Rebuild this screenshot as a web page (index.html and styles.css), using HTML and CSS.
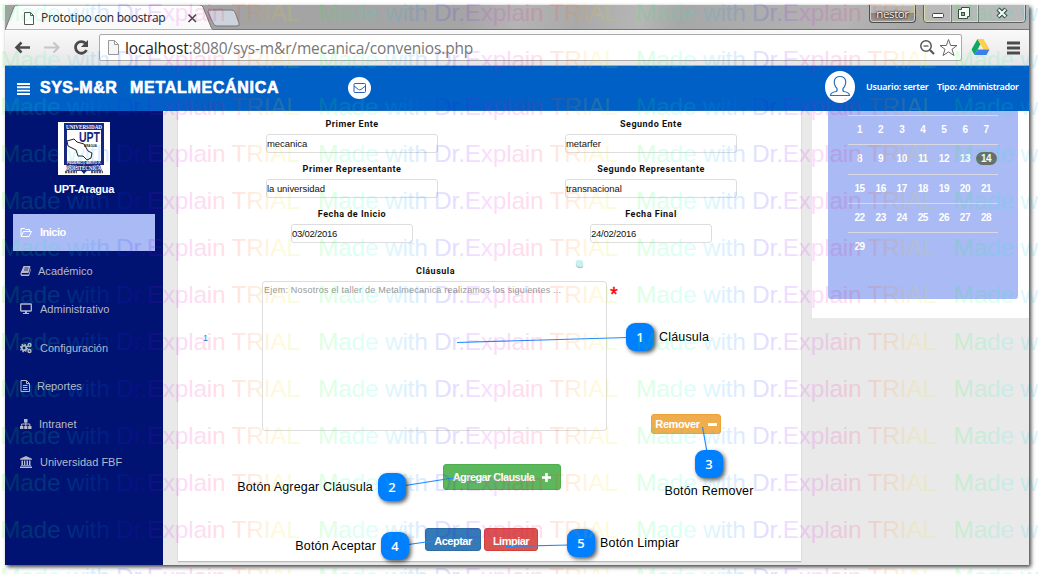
FILE: index.html
```html
<!DOCTYPE html>
<html lang="es">
<head>
<meta charset="utf-8">
<title>Prototipo con boostrap</title>
<link rel="stylesheet" href="styles.css">
</head>
<body>
<div class="window">
  <div class="tabstrip">
    <svg class="tabshape" width="250" height="25" viewBox="0 0 250 25">
      <defs><linearGradient id="tb" x1="0" y1="0" x2="0" y2="1"><stop offset="0" stop-color="#fff"/><stop offset="1" stop-color="#f8f8f8"/></linearGradient></defs>
      <path d="M0 25L9 2Q10 0 13 0H194Q197 0 198 2L206 22Q207 25 210 25Z" fill="url(#tb)" stroke="#777"/>
      <path d="M204 5H226Q229 5 230 7L234 18Q235 21 232 21H212Q209 21 208 18L203 7Q203 5 204 5Z" fill="#ccd3dc" stroke="#777"/>
      <path d="M19.500 7.500H25.500L28.500 10.500V19.500H19.500ZM25.500 7.500V10.500H28.500" fill="#fff" stroke="#555"/>
      <path d="M183.500 9.500L191 17M191 9.500L183.500 17" stroke="#444" stroke-width="1.500"/>
    </svg>
    <span class="tabtitle">Prototipo con boostrap</span>
    <span class="user">nestor</span>
    <svg class="winbtns" width="104" height="19" viewBox="0 0 104 19">
      <path d="M.5 0V14Q.5 17.500 4 17.500H99Q102.500 17.500 102.500 14V0" fill="#b9b9b9" stroke="#5f5f5f"/>
      <path d="M1.500 0V14Q1.500 16.500 4 16.500H99Q101.500 16.500 101.500 14V0M27.500 0V17M54.500 0V17" fill="none" stroke="#d8d8d8"/>
      <path d="M28.500 0V17M55.500 0V17" stroke="#777"/>
      <rect x="9.500" y="8.500" width="11" height="4" rx="1" fill="#fff" stroke="#444"/>
      <path d="M38.500 2.500H46.500V11.500H44.500V13.500H35.500V4.500H38.500Z" fill="#fff" stroke="#444"/>
      <rect x="38.500" y="7.500" width="3" height="3" fill="#aaa" stroke="#444"/>
      <path d="M75 4L83 12M83 4L75 12" stroke="#444" stroke-width="4.500"/><path d="M75.500 4.500L82.500 11.500M82.500 4.500L75.500 11.500" stroke="#fff" stroke-width="2"/>
    </svg>
  </div>
  <div class="toolbar">
    <svg class="nav" width="94" height="35" viewBox="0 0 94 35" fill="none">
      <path d="M25 17.500H12M16.500 12.500L11.500 17.500L16.500 22.500" stroke="#4b4b4b" stroke-width="2.600"/>
      <path d="M39 17.500H53M48.500 12.500L53.500 17.500L48.500 22.500" stroke="#c6c6c6" stroke-width="2.200"/>
      <path d="M81 14A5.800 5.800 0 1 0 81.500 20" stroke="#4b4b4b" stroke-width="2.800"/><path d="M83 10V17H76Z" fill="#4b4b4b"/>
    </svg>
    <div class="address">
      <svg width="11" height="15" viewBox="0 0 11 15"><path d="M.5.5H6.500L10.500 4.500V14.500H.5ZM6.500.5V4.500H10.500" fill="#f6f6f6" stroke="#999"/></svg>
      <span class="url"><b>localhost</b>:8080/sys-m&amp;r/mecanica/convenios.php</span>
      <svg class="tools" width="40" height="20" viewBox="0 0 40 20" fill="none">
        <circle cx="7" cy="8" r="5.200" stroke="#555" stroke-width="1.500"/><path d="M4.500 8H9.500" stroke="#555" stroke-width="1.300"/><path d="M11 12L15 16" stroke="#555" stroke-width="2.200"/>
        <path d="M29.500 1.500L31.700 7.500H38L33 11.300L35 17.500L29.500 13.900L24 17.500L26 11.300L21 7.500H27.300Z" stroke="#666"/>
      </svg>
    </div>
    <svg class="drive" width="19" height="16" viewBox="0 0 18 16"><path d="M6 0L0 10.500L3 16L9 5.300Z" fill="#0da960"/><path d="M6 0H12L18 10.500H12Z" fill="#ffcf48"/><path d="M6 10.500H18L15 16H3Z" fill="#3d7fe8"/></svg>
    <svg class="burger" width="13" height="14" viewBox="0 0 13 14"><path d="M0 2H13M0 7H13M0 12H13" stroke="#4b4b4b" stroke-width="3"/></svg>
  </div>
  <header class="header">
    <svg class="menu" width="14" height="12" viewBox="0 0 14 12"><path d="M0 1H13M0 4.300H13M0 7.600H13M0 11H13" stroke="#fff" stroke-width="1.900"/></svg>
    <span class="brand">SYS-M&amp;R</span><span class="brand brand2">METALMECÁNICA</span>
    <span class="mail"><svg width="14" height="12" viewBox="0 0 14 12" fill="none" stroke="#2b62b5"><rect x="1" y="1.500" width="11.500" height="9" rx="1"/><path d="M1 4L5.500 7.500Q6.700 8.300 8 7.500L12.500 4"/></svg></span>
    <span class="avatar"><svg width="22" height="24" viewBox="0 0 22 24" fill="none" stroke="#2b70b9" stroke-width="1.200"><path d="M8 13.500C4 9 4 1.500 11 1.500S18 9 14 13.500Q13.500 16 15 16.500Q20.500 17.500 20.500 20.500H1.500Q1.500 17.500 7 16.500Q8.500 16 8 13.500Z"/></svg></span>
    <span class="who">Usuario: serter</span><span class="role">Tipo: Administrador</span>
  </header>
  <div class="body">
    <aside class="sidebar">
      <svg class="logo" width="52" height="53" viewBox="0 0 52 53">
        <rect width="52" height="53" fill="#fff"/>
        <path d="M6 1H46V43H34L26 52L18 43H6Z" fill="#16277d"/>
        <path d="M9 8H43V39H9Z" fill="#fff"/><path d="M7 50H19M33 50H45" stroke="#555" stroke-width="2.500" stroke-dasharray="2 .7"/>
        <path d="M9 19L16 17L19 20L26 22L30 29L34 31L33 36L29 38L25 34L20 34L18 28L10 24Z" fill="#fff" stroke="#222" stroke-width="1"/>
        <text x="8" y="6.500" class="lg" textLength="36" lengthAdjust="spacingAndGlyphs">UNIVERSIDAD</text>
        <text x="21" y="20" class="upt" textLength="21" lengthAdjust="spacingAndGlyphs">UPT</text>
        <text x="26" y="25" class="ld" textLength="13" lengthAdjust="spacingAndGlyphs">ARAGUA</text>
        <text x="9" y="42" class="ld lw" textLength="34" lengthAdjust="spacingAndGlyphs">FEDERICO BRITO F.</text>
        <text x="9" y="47.500" class="lg lp" textLength="34" lengthAdjust="spacingAndGlyphs">POLITÉCNICA</text>
      </svg>
      <div class="org">UPT-Aragua</div>
      <nav>
        <a class="item active"><svg width="12" height="12" viewBox="0 0 12 12" fill="none" stroke="currentColor"><path d="M1 9.500V2.500H4.500L5.500 3.500H9.500V5.500M1 10.500L3.500 5.500H11.500L9 10.500Z"/></svg><span class="g8">Inicio</span></a>
        <a class="item"><svg width="12" height="12" viewBox="0 0 12 12" fill="currentColor"><path d="M3.500 1H10.500L8.500 8H2Q1 8.500 2 9.500H8.500L10.800 3V5L9 11H1.500Q0 10 .5 8Z"/><path d="M4.500 3H8.500M4 5H8" stroke="#001373" stroke-width=".8"/></svg><span class="g6">Académico</span></a>
        <a class="item"><svg width="12" height="12" viewBox="0 0 12 12"><rect x=".7" y="1" width="10.600" height="7" rx=".5" fill="none" stroke="currentColor" stroke-width="1.300"/><path d="M5 8H7V10H9V11H3V10H5Z" fill="currentColor"/></svg><span class="g8">Administrativo</span></a>
        <a class="item"><svg width="12" height="12" viewBox="0 0 12 12" fill="none" stroke="currentColor"><circle cx="4" cy="6" r="2.300" stroke-width="1.800"/><circle cx="4" cy="6" r="3.700" stroke-dasharray="1.500 1.400" stroke-width="1.200"/><circle cx="9.500" cy="3" r="1.500" stroke-width="1.400"/><circle cx="9.500" cy="9" r="1.500" stroke-width="1.400"/></svg><span class="g8">Configuración</span></a>
        <a class="item"><svg width="12" height="12" viewBox="0 0 12 12" fill="none" stroke="currentColor"><path d="M1 .5H6.500L9.500 3.500V11.500H1ZM6.500 .5V3.500H9.500M3 5.500H7.500M3 7.500H7.500M3 9.500H7.500"/></svg><span class="g5">Reportes</span></a>
        <a class="item"><svg width="12" height="12" viewBox="0 0 12 12"><path d="M4 1H7.500V4.500H4ZM0 8H3.400V11H0ZM4.200 8H7.400V11H4.200ZM8.200 8H11.500V11H8.200Z" fill="currentColor"/><path d="M5.800 4V8M1.700 8V6H9.800V8" fill="none" stroke="currentColor"/></svg><span class="g7">Intranet</span></a>
        <a class="item"><svg width="12" height="12" viewBox="0 0 12 12" fill="currentColor"><path d="M6 0L12 2.800V3.800H0V2.800ZM1.500 4.500H3V9H1.500ZM4 4.500H5.300V9H4ZM6.600 4.500H8V9H6.600ZM9 4.500H10.500V9H9ZM1 9.200H11V10H1ZM0 10.500H12V12H0Z"/></svg><span class="g8">Universidad FBF</span></a>
      </nav>
    </aside>
    <main class="panel">
      <div class="fields">
        <div class="field"><label>Primer Ente</label><div class="input">mecanica</div></div>
        <div class="field"><label>Segundo Ente</label><div class="input">metarfer</div></div>
        <div class="field"><label>Primer Representante</label><div class="input">la universidad</div></div>
        <div class="field"><label>Segundo Representante</label><div class="input">transnacional</div></div>
        <div class="field"><label>Fecha de Inicio</label><div class="input date">03/02/2016</div></div>
        <div class="field"><label>Fecha Final</label><div class="input date">24/02/2016</div></div>
      </div>
      <div class="clause">
        <span class="num">1</span>
        <div class="clausebox">
          <div class="clabel"><label>Cláusula</label><i class="dot"></i></div>
          <div class="area">Ejem: Nosotros el taller de Metalmecanica realizamos los siguientes ...</div>
        </div>
        <span class="star">*</span>
        <div class="btn orange">Remover<svg width="9" height="9" viewBox="0 0 9 9"><path d="M0 4.500H9" stroke="#fff" stroke-width="3"/></svg></div>
      </div>
      <div class="btn green">Agregar Clausula<svg width="9" height="9" viewBox="0 0 9 9"><path d="M0 4.500H9M4.500 0V9" stroke="#fff" stroke-width="2.600"/></svg></div>
      <div class="actions"><div class="btn blue">Aceptar</div><div class="btn red">Limpiar</div></div>
    </main>
    <section class="side">
      <div class="calendar">
        <div class="week"><span>1</span><span>2</span><span>3</span><span>4</span><span>5</span><span>6</span><span>7</span></div>
        <div class="week"><span>8</span><span>9</span><span>10</span><span>11</span><span>12</span><span>13</span><span class="today">14</span></div>
        <div class="week"><span>15</span><span>16</span><span>17</span><span>18</span><span>19</span><span>20</span><span>21</span></div>
        <div class="week"><span>22</span><span>23</span><span>24</span><span>25</span><span>26</span><span>27</span><span>28</span></div>
        <div class="week"><span>29</span></div>
      </div>
    </section>
  </div>
</div>

<svg class="lines" width="1038" height="574"><path d="M457 342.500L628 337.500M702.500 427L707 452M402 486L453 478M405 545L433 541M506 546.500L570 545" stroke="#1a8cff" stroke-width="1.200" fill="none"/></svg>
<div class="note n1"><b>1</b><span>Cláusula</span></div>
<div class="note n2"><span>Botón Agregar Cláusula</span><b>2</b></div>
<div class="note n3"><b>3</b><span>Botón Remover</span></div>
<div class="note n4"><span>Botón Aceptar</span><b>4</b></div>
<div class="note n5"><b>5</b><span>Botón Limpiar</span></div>

<svg class="watermark" width="1038" height="574">
  <defs>
    <linearGradient id="rainbow" gradientUnits="userSpaceOnUse" x1="2" y1="0" x2="319.500" y2="0" spreadMethod="repeat">
      <stop offset="0" stop-color="#00ff20"/><stop offset=".17" stop-color="#00ffe0"/><stop offset=".33" stop-color="#0060ff"/><stop offset=".42" stop-color="#3000ff"/><stop offset=".53" stop-color="#e000ff"/><stop offset=".67" stop-color="#ff0060"/><stop offset=".76" stop-color="#ff5000"/><stop offset=".88" stop-color="#ffe000"/><stop offset="1" stop-color="#60ff00"/>
    </linearGradient>
    <g id="row" fill="url(#rainbow)">
      <text x="0" y="21" textLength="300">Made with Dr.Explain TRIAL</text><text x="318" y="21" textLength="300">Made with Dr.Explain TRIAL</text><text x="636" y="21" textLength="300">Made with Dr.Explain TRIAL</text><text x="953.500" y="21" textLength="300">Made with Dr.Explain TRIAL</text>
    </g>
  </defs>
  <use href="#row"/><use href="#row" y="47"/><use href="#row" y="94"/><use href="#row" y="141"/><use href="#row" y="188"/><use href="#row" y="235"/><use href="#row" y="282"/><use href="#row" y="329"/><use href="#row" y="376"/><use href="#row" y="423"/><use href="#row" y="470"/><use href="#row" y="517"/><use href="#row" y="564"/>
</svg>
</body>
</html>
```
FILE: styles.css
```css
* { box-sizing: border-box; }
body { margin: 0; padding: 5px 9px 9px 5px; height: 574px; overflow: hidden; background: #fff; font-family: "Liberation Sans", Arial, sans-serif; }
svg { display: block; flex: none; }
span, label { white-space: nowrap; }
.window { width: 1024px; height: 560px; display: flex; flex-direction: column; box-shadow: 2px 2px 4px rgba(0,0,0,.75); background: #e9e9e9; }

.tabstrip { height: 25px; display: flex; background: linear-gradient(100deg, #a2a2a2 0, #a5a5a5 45%, #b4b4b4 50%, #a9a9a9 56%, #b6b6b6 62%, #a7a7a7 66%, #b4b4b4 82%, #a6a6a6 90%, #b5b5b5); border-bottom: 1px solid #777; }
.tabtitle { margin-left: -214px; width: 214px; font: 12px/26px "Open Sans", "Noto Sans", sans-serif; letter-spacing: -.25px; color: #222; }
.user { margin-left: 614px; width: 47px; height: 18px; border: 1px solid #4d4d4d; border-top: 0; border-radius: 0 0 4px 4px; background: linear-gradient(#b5b5b5 50%, #858585 50%, #9a9a9a); box-shadow: inset 0 0 0 1px #ccc; color: #fff; text-align: center; font: 11.500px/18px "Open Sans", sans-serif; letter-spacing: -.4px; text-shadow: 0 0 2px #000, 0 0 2px #000; }
.winbtns { margin-left: 7px; }

.toolbar { height: 36px; display: flex; background: linear-gradient(#fafafa, #e6e6e6); border-bottom: 1px solid #aaa; }
.address { width: 863px; height: 27px; margin-top: 4px; padding-left: 8px; display: flex; align-items: center; background: #fff; border: 1px solid #aaa; border-radius: 2px; }
.url { margin-left: 6px; width: 794px; color: #777; font: 15.500px/24px "Open Sans", "Noto Sans", sans-serif; letter-spacing: -.15px; }
.url b { color: #222; font-weight: 400; }
.drive { margin: 9px 0 0 9px; }
.burger { margin: 11px 0 0 17px; }

.header { height: 45px; display: flex; align-items: center; background: #0060c6; color: #fff; }
.menu { margin-left: 12px; }
.brand { margin: -2px 0 0 9px; width: 78px; font-size: 16px; font-weight: 700; -webkit-text-stroke: .6px #fff; letter-spacing: .5px; }
.brand2 { margin-left: 12px; width: 150px; letter-spacing: .7px; }
.mail { margin: -2px 0 0 68px; width: 23px; height: 22px; border-radius: 50%; background: #fff; display: flex; align-items: center; justify-content: center; }
.avatar { margin-left: 454px; width: 30px; height: 32px; border-radius: 50%; background: #fff; display: flex; align-items: center; justify-content: center; margin-top: -3px; }
.who, .role { font: 600 9px/12px "Noto Sans", sans-serif; letter-spacing: -.28px; margin-top: -3px; }
.who { margin-left: 11px; width: 71px; letter-spacing: -.2px; }

.body { height: 454px; display: flex; align-items: flex-start; }
.sidebar { width: 158px; height: 454px; background: #001373; color: #fff; }
.logo { margin: 11px 0 0 53px; }
.lg { font: 700 6px "Liberation Serif", serif; fill: #fff; }
.lp { paint-order: stroke; stroke: #16277d; stroke-width: 1.500px; }
.upt { font: 700 15px "Liberation Sans", sans-serif; fill: #16277d; }
.ld { font: 700 4px "Liberation Sans", sans-serif; fill: #222; }
.lw { fill: #fff; }
.org { text-align: center; font-size: 11px; font-weight: 700; line-height: 14px; margin-top: 7px; letter-spacing: -.3px; }
.sidebar nav { margin: 18px 8px 0; display: flex; flex-direction: column; }
.item { height: 38.250px; padding-left: 7px; display: flex; align-items: center; color: #b8b9c6; font-size: 11px; letter-spacing: .02px; }
.item.active { height: 37px; background: #a9baf5; color: #fff; font-weight: 700; letter-spacing: -.5px; margin-bottom: 1px; padding-bottom: 1px; }
.g5 { margin-left: 5px; } .g6 { margin-left: 6px; } .g7 { margin-left: 7px; } .g8 { margin-left: 8px; }

.panel { width: 623px; height: 451px; margin-left: 15px; background: #fff; border-bottom: 1px solid #bbb; box-shadow: 0 0 1px #aaa; }
.fields { display: grid; grid-template-columns: 172px 172px; column-gap: 127px; grid-auto-rows: 45px; padding-left: 88px; }
.field { padding-top: 6px; display: flex; flex-direction: column; align-items: center; }
label { display: block; height: 14px; line-height: 14px; margin-bottom: 3px; font-family: Roboto, "Liberation Sans", sans-serif; font-size: 9px; font-weight: 700; letter-spacing: .5px; color: #111; }
.input { width: 172px; height: 19px; border: 1px solid #ddd; border-radius: 3px; font-size: 9.500px; line-height: 18px; letter-spacing: -.05px; color: #111; }
.input.date { width: 122px; letter-spacing: -.25px; }
.clause { display: flex; padding-top: 18px; height: 188px; }
.num { width: 57px; margin-left: 25px; padding-top: 69px; font-size: 9px; color: #1580db; }
.clausebox { width: 345px; margin-left: 2px; }
.clabel { display: flex; padding-left: 154px; height: 17px; }
.clabel label { width: 40px; }
.dot { width: 7px; height: 7px; margin-left: 120px; margin-top: -4px; border-radius: 2px 3px 2px 4px; background: #c8f2f2; box-shadow: 0 1px 1px #aaa; }
.area { height: 150px; padding: 2px 0 0 1px; border: 1px solid #ddd; border-radius: 3px; color: #999; font-size: 9px; line-height: 13px; letter-spacing: .22px; white-space: nowrap; }
.star { width: 44px; padding: 19px 0 0 3px; color: #f00; font-size: 20px; line-height: 22px; -webkit-text-stroke: .4px #f00; }
.btn { display: flex; align-items: center; justify-content: center; gap: 8px; color: #fff; font-size: 11px; font-weight: 700; letter-spacing: -.5px; border: 1px solid; border-radius: 3px; white-space: nowrap; }
.orange { width: 70px; height: 20px; margin-top: 150px; background: #f0ad4e; border-color: #eea236; letter-spacing: -.4px; }
.green { width: 118px; height: 26px; margin: 30px 0 0 265px; background: #5cb85c; border-color: #4cae4c; letter-spacing: -.6px; }
.actions { display: flex; gap: 3px; margin: 38px 0 0 247px; }
.blue { width: 56px; height: 23px; background: #337ab7; border-color: #2e6da4; padding-top: 3px; }
.red { width: 54px; height: 23px; background: #d9534f; border-color: #d43f3a; padding-top: 3px; }

.side { width: 217px; height: 207px; margin-left: 11px; padding: 0 11px 19px 16px; background: #fff; }
.calendar { height: 188px; padding: 4px 20px 0; background: #a9baf5; border-radius: 0 0 3px 3px; }
.week { height: 29.250px; padding: 0 1px 1px; border-top: 1px solid #d8d9e3; display: grid; grid-template-columns: repeat(7, 21.100px); align-items: center; text-align: center; color: #fff; font-size: 10px; font-weight: 700; letter-spacing: -.4px; }
.today { width: 21px; height: 13px; line-height: 13px; border-radius: 7px; background: #6b6b6b; }

.lines, .watermark { position: absolute; left: 0; top: 0; pointer-events: none; }
.watermark { opacity: .13; font: 24.500px "Liberation Sans", Arial, sans-serif; }
.note { position: absolute; display: flex; align-items: center; gap: 5px; font-size: 12.500px; letter-spacing: .17px; color: #000; }
.note b { width: 28px; height: 28px; flex: none; border-radius: 9px; background: #0080ff; box-shadow: 2px 2px 4px rgba(0,0,0,.65); color: #fff; font: 600 13px/28px "Open Sans", sans-serif; text-align: center; }
.n1 { left: 626px; top: 323px; }
.n2 { right: 632px; top: 473px; }
.n3 { left: 665px; top: 450px; width: 88px; flex-direction: column; gap: 6px; }
.n4 { right: 629px; top: 532px; }
.n5 { left: 567px; top: 529px; }
```
